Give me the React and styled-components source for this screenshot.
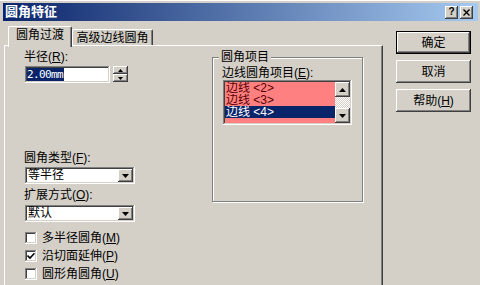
import React from "react";
import styled, { createGlobalStyle, css } from "styled-components";

const Global = createGlobalStyle`
  html, body { margin: 0; padding: 0; background: #D4D0C8; }
  body {
    font-family: "Liberation Sans", "Noto Sans CJK SC", sans-serif;
    font-size: 12px;
    color: #000;
  }
  * { box-sizing: border-box; }
`;

const raised = css`
  background: #D4D0C8;
  box-shadow: inset -1px -1px #404040, inset 1px 1px #fff, inset -2px -2px #808080, inset 2px 2px #D4D0C8;
`;

const sunken = css`
  box-shadow: inset -1px -1px #fff, inset 1px 1px #808080, inset -2px -2px #D4D0C8, inset 2px 2px #404040;
`;

const Window = styled.div`
  width: 480px;
  height: 285px;
  overflow: hidden;
  background: #D4D0C8;
  padding: 3px 2px 0 3px;
  border-top: 1px solid #fff;
  display: flex;
  flex-direction: column;
`;

const TitleBar = styled.div`
  height: 18px;
  margin-top: -1px;
  flex: none;
  display: flex;
  align-items: center;
  justify-content: space-between;
  padding: 0 5px 0 2px;
  background: linear-gradient(to right, #0A246A, #A6CAF0);
`;

const TitleText = styled.span`
  color: #fff;
  font-weight: bold;
  font-size: 13px;
  line-height: 18px;
`;

const CaptionButtons = styled.div`
  display: flex;
  gap: 2px;
`;

const CaptionButton = styled.div`
  ${raised};
  width: 13px;
  height: 13px;
  display: flex;
  align-items: center;
  justify-content: center;
  font-family: "Liberation Sans", sans-serif;
  font-weight: bold;
  font-size: 10px;
  line-height: 1;
`;

const Body = styled.div`
  display: flex;
  align-items: flex-start;
  padding-left: 1px;
`;

const TabArea = styled.div`
  width: 379px;
  margin-top: 5px;
  display: flex;
  flex-direction: column;
`;

const TabStrip = styled.div`
  height: 19px;
  display: flex;
  align-items: flex-end;
  padding-left: 4px;
`;

const Tab = styled.div`
  position: relative;
  width: ${(p) => (p.$active ? 64 : 81)}px;
  height: ${(p) => (p.$active ? 21 : 16)}px;
  margin-bottom: ${(p) => (p.$active ? -2 : 0)}px;
  z-index: ${(p) => (p.$active ? 2 : 0)};
  background: #D4D0C8;
  border-top: 1px solid #fff;
  border-left: 1px solid #fff;
  border-right: 1px solid #404040;
  border-radius: 2px 2px 0 0;
  box-shadow: inset -1px 0 #808080;
  display: flex;
  align-items: ${(p) => (p.$active ? "flex-start" : "center")};
  padding-top: ${(p) => (p.$active ? 1 : 0)}px;
  justify-content: center;
  line-height: 14px;
  white-space: nowrap;
`;

const Panel = styled.div`
  height: 250px;
  border: 1px solid;
  border-color: #fff #404040 #404040 #fff;
  box-shadow: inset -1px -1px #808080;
  padding: 4px 0 0 19px;
  display: flex;
  align-items: flex-start;
`;

const LeftCol = styled.div`
  width: 112px;
  display: flex;
  flex-direction: column;
`;

const FieldLabel = styled.div`
  height: 14px;
  line-height: 14px;
  margin-top: ${(p) => p.$gap || 0}px;
  white-space: nowrap;
`;

const U = styled.span`
  text-decoration: underline;
`;

const InputRow = styled.div`
  display: flex;
  align-items: flex-start;
  margin-top: 2px;
  margin-left: 1px;
`;

const TextInput = styled.div`
  ${sunken};
  background: #fff;
  width: 85px;
  height: 17px;
  padding: 2px 0 0 2px;
  display: flex;
`;

const Selected = styled.span`
  background: #0A246A;
  color: #fff;
  font-family: "DejaVu Sans Mono", monospace;
  font-size: 11px;
  letter-spacing: -0.6px;
  line-height: 13px;
  height: 13px;
  padding-right: 1px;
`;

const Spin = styled.div`
  margin-left: 3px;
  width: 15px;
  display: flex;
  flex-direction: column;
`;

const SmallButton = styled.div`
  ${raised};
  width: ${(p) => p.$w || 15}px;
  height: ${(p) => p.$h}px;
  flex: none;
  display: flex;
  align-items: center;
  justify-content: center;
`;

const Combo = styled.div`
  ${sunken};
  background: #fff;
  width: 110px;
  height: 17px;
  margin-top: ${(p) => p.$gap}px;
  margin-left: 1px;
  padding: 2px;
  display: flex;
  align-items: stretch;
`;

const ComboText = styled.span`
  flex: 1;
  line-height: 13px;
  padding-left: 1px;
  white-space: nowrap;
`;

const CheckList = styled.div`
  margin-top: 7px;
  margin-left: 1px;
  display: flex;
  flex-direction: column;
`;

const CheckRow = styled.label`
  height: 18px;
  display: flex;
  align-items: center;
  gap: 5px;
`;

const CheckText = styled.span`
  white-space: nowrap;
  line-height: 14px;
`;

const Box = styled.span`
  ${sunken};
  background: #fff;
  width: 12px;
  height: 12px;
  flex: none;
  display: flex;
  align-items: center;
  justify-content: center;
`;

const Group = styled.div`
  position: relative;
  margin-left: 76px;
  margin-top: 7px;
  width: 151px;
  height: 145px;
  border: 1px solid #808080;
  box-shadow: inset 1px 1px #fff, 1px 1px #fff;
  padding: 8px 0 0 9px;
`;

const GroupTitle = styled.span`
  position: absolute;
  top: -8px;
  left: 6px;
  padding: 0 2px;
  background: #D4D0C8;
  line-height: 14px;
`;

const ListBox = styled.div`
  ${sunken};
  width: 129px;
  height: 45px;
  margin-left: 1px;
  padding: 2px;
  display: flex;
`;

const Items = styled.div`
  flex: 1;
  background: #FF8080;
  display: flex;
  flex-direction: column;
`;

const Item = styled.div`
  height: 12px;
  line-height: 12px;
  padding-left: 1px;
  white-space: nowrap;
  overflow: hidden;
  background: ${(p) => (p.$selected ? "#0A246A" : "transparent")};
  color: ${(p) => (p.$selected ? "#fff" : "#5A0000")};
`;

const ScrollBar = styled.div`
  width: 15px;
  display: flex;
  flex-direction: column;
`;

const Track = styled.div`
  flex: 1;
  background: repeating-conic-gradient(#D4D0C8 0 25%, #fff 0 50%) 0 0 / 2px 2px;
`;

const ButtonCol = styled.div`
  margin-left: 13px;
  margin-top: 10px;
  width: 75px;
  display: flex;
  flex-direction: column;
  gap: 6px;
`;

const DialogButton = styled.div`
  ${raised};
  height: 23px;
  display: flex;
  align-items: center;
  justify-content: center;
  line-height: 14px;
  ${(p) =>
    p.$default &&
    css`
      border: 1px solid #000;
    `}
`;

const Arrow = ({ up, w = 7, h = 4 }) => (
  <svg width={w} height={h} viewBox={`0 0 ${w} ${h}`}>
    {up ? (
      <polygon points={`0,${h} ${w},${h} ${w / 2},0`} fill="#000" />
    ) : (
      <polygon points={`0,0 ${w},0 ${w / 2},${h}`} fill="#000" />
    )}
  </svg>
);

const Check = () => (
  <svg width="8" height="8" viewBox="0 0 8 8">
    <path d="M0.5 3.5 L3 6 L7.5 1.2" stroke="#000" strokeWidth="1.6" fill="none" />
  </svg>
);

export default function App() {
  return (
    <>
      <Global />
      <Window>
        <TitleBar>
          <TitleText>圆角特征</TitleText>
          <CaptionButtons>
            <CaptionButton>?</CaptionButton>
            <CaptionButton>
              <svg width="7" height="7" viewBox="0 0 7 7">
                <path d="M0.5 0.5 L6.5 6.5 M6.5 0.5 L0.5 6.5" stroke="#000" strokeWidth="1.4" />
              </svg>
            </CaptionButton>
          </CaptionButtons>
        </TitleBar>
        <Body>
          <TabArea>
            <TabStrip>
              <Tab $active>圆角过渡</Tab>
              <Tab>高级边线圆角</Tab>
            </TabStrip>
            <Panel>
              <LeftCol>
                <FieldLabel>
                  半径(<U>R</U>):
                </FieldLabel>
                <InputRow>
                  <TextInput>
                    <Selected>2.00mm</Selected>
                  </TextInput>
                  <Spin>
                    <SmallButton $h={8}>
                      <Arrow up w={5} h={3} />
                    </SmallButton>
                    <SmallButton $h={8}>
                      <Arrow w={5} h={3} />
                    </SmallButton>
                  </Spin>
                </InputRow>
                <FieldLabel $gap={68}>
                  圆角类型(<U>F</U>):
                </FieldLabel>
                <Combo $gap={2}>
                  <ComboText>等半径</ComboText>
                  <SmallButton $w={15} $h={13}>
                    <Arrow w={7} h={4} />
                  </SmallButton>
                </Combo>
                <FieldLabel $gap={4}>
                  扩展方式(<U>O</U>):
                </FieldLabel>
                <Combo $gap={3}>
                  <ComboText>默认</ComboText>
                  <SmallButton $w={15} $h={13}>
                    <Arrow w={7} h={4} />
                  </SmallButton>
                </Combo>
                <CheckList>
                  <CheckRow>
                    <Box />
                    <CheckText>
                      多半径圆角(<U>M</U>)
                    </CheckText>
                  </CheckRow>
                  <CheckRow>
                    <Box>
                      <Check />
                    </Box>
                    <CheckText>
                      沿切面延伸(<U>P</U>)
                    </CheckText>
                  </CheckRow>
                  <CheckRow>
                    <Box />
                    <CheckText>
                      圆形角圆角(<U>U</U>)
                    </CheckText>
                  </CheckRow>
                </CheckList>
              </LeftCol>
              <Group>
                <GroupTitle>圆角项目</GroupTitle>
                <FieldLabel>
                  边线圆角项目(<U>E</U>):
                </FieldLabel>
                <ListBox>
                  <Items>
                    <Item>边线 &lt;2&gt;</Item>
                    <Item>边线 &lt;3&gt;</Item>
                    <Item $selected>边线 &lt;4&gt;</Item>
                  </Items>
                  <ScrollBar>
                    <SmallButton $h={15}>
                      <Arrow up w={7} h={4} />
                    </SmallButton>
                    <Track />
                    <SmallButton $h={15}>
                      <Arrow w={7} h={4} />
                    </SmallButton>
                  </ScrollBar>
                </ListBox>
              </Group>
            </Panel>
          </TabArea>
          <ButtonCol>
            <DialogButton $default>确定</DialogButton>
            <DialogButton>取消</DialogButton>
            <DialogButton>
              帮助(<U>H</U>)
            </DialogButton>
          </ButtonCol>
        </Body>
      </Window>
    </>
  );
}
